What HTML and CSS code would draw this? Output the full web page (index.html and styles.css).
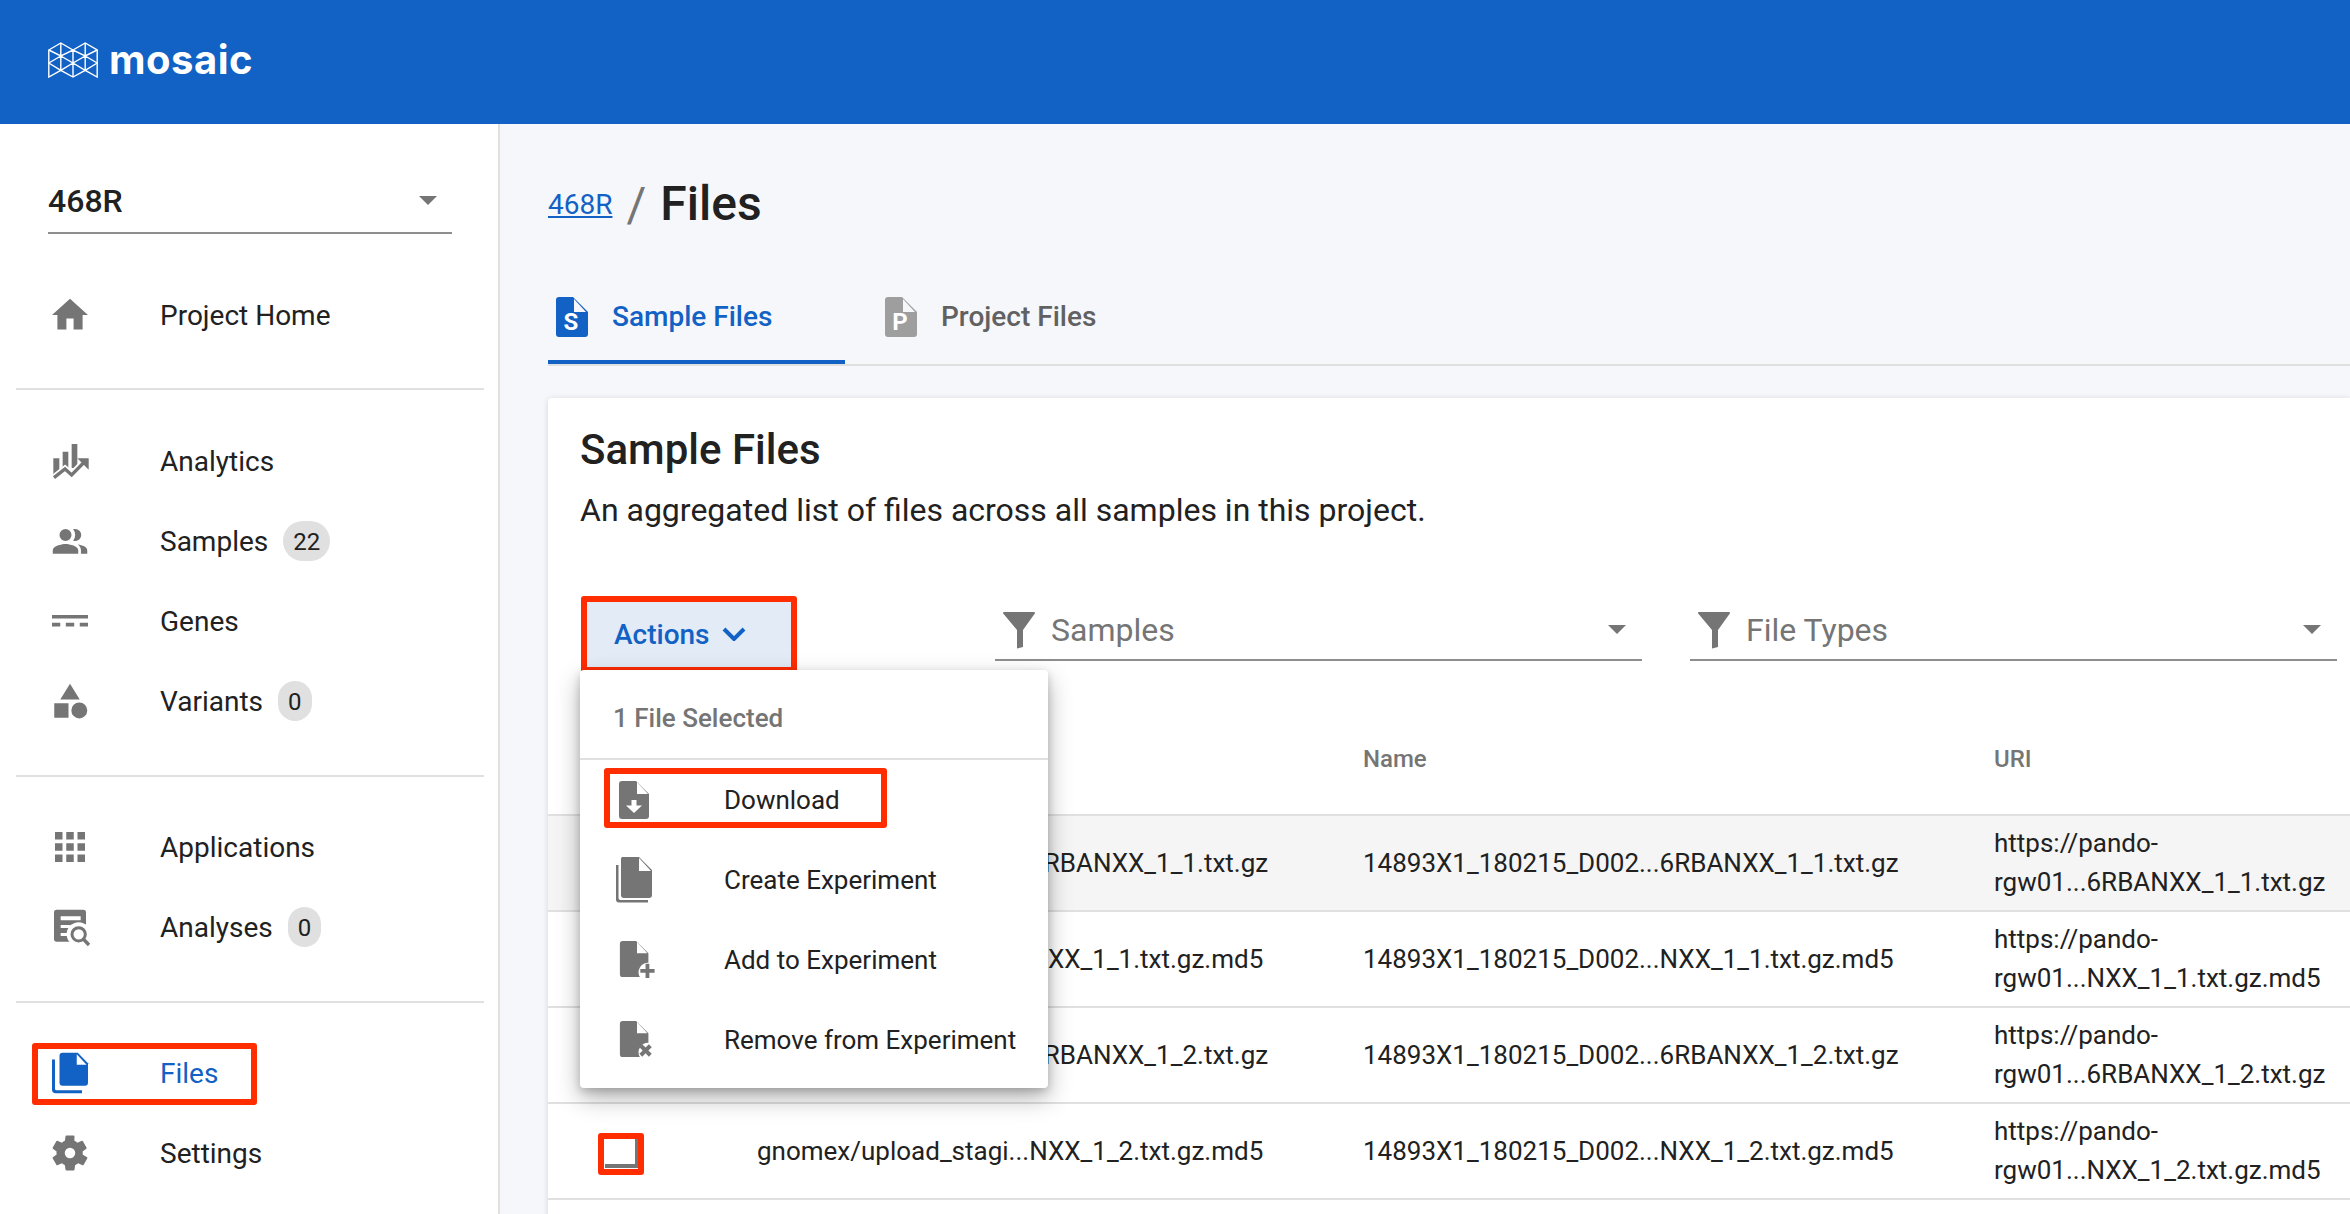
FILE: index.html
```html
<!DOCTYPE html>
<html lang="en">
<head>
<meta charset="utf-8">
<title>Mosaic - Files</title>
<link rel="stylesheet" href="styles.css">
</head>
<body>
<header class="topbar">
  <div class="logo">
    <svg class="logo-mark" viewBox="0 0 50 36" fill="none" stroke="#fff" stroke-width="1.4">
      <path d="M0.8 8 L12.8 1 L25 8 L37.2 1 L49.2 8 V35 L37.2 28.400 L25 35 L12.8 28.400 L0.8 35 Z"/>
      <path d="M12.800 1 V14 M37.200 1 V14 M25 8 V35 M0.800 8 L12.800 14 L25 8 L37.200 14 L49.200 8 M0.800 21 L12.800 14 L25 21 L37.200 14 L49.200 21 M0.800 21 L12.800 28.400 L25 21 L37.200 28.400 L49.200 21 M12.800 14 V28.400 M37.200 14 V28.400"/>
    </svg>
    <span class="logo-text">mosaic</span>
  </div>
</header>
<div class="shell">
  <aside class="sidebar">
    <div class="project-select">
      <span class="project-name">468R</span>
      <span class="caret"></span>
    </div>
    <nav class="nav-group g1">
      <a class="nav-row"><svg class="nav-icon" viewBox="2 2 20 20"><path d="M10 20v-6h4v6h5v-8h3L12 3 2 12h3v8z"/></svg><span>Project Home</span></a>
    </nav>
    <nav class="nav-group g2">
      <a class="nav-row"><svg class="nav-icon" viewBox="36 12 108 108"><path d="M40 58h18v50H40zM68 38h17v48H68zM95 15h17v72H95z"/><path class="cut" d="M42 118L75 92 95 110 136 68"/><path class="line" d="M42 116L75 90 95 108 136 66"/><path d="M112 58h34v34z"/></svg><span>Analytics</span></a>
      <a class="nav-row"><svg class="nav-icon" viewBox="0 0 24 24"><path d="M9 12a4 4 0 1 0 0-8 4 4 0 0 0 0 8zM9 14c-2.900 0-8.500 1.400-8.500 4.200V20.500h17v-2.300C17.500 15.400 11.900 14 9 14z"/><path d="M15.500 12a4 4 0 0 0 0-8c-.5 0-1 .1-1.400.2a6 6 0 0 1 0 7.600c.4.100.9.200 1.400.200zM17.300 14.300c1.200 1 2 2.300 2 3.900v2.300h4.200v-2.300c0-2.400-3.400-3.500-6.200-3.900z"/></svg><span>Samples</span><b class="count">22</b></a>
      <a class="nav-row"><svg class="nav-icon" viewBox="0 0 24 24"><path d="M0 8h24v2.400H0zM0 13.200h5.500v2.400H0zM9.200 13.200h5.600v2.400H9.200zM18.500 13.200H24v2.400h-5.500z"/></svg><span>Genes</span></a>
      <a class="nav-row"><svg class="nav-icon" viewBox="0 0 24 24"><path d="M12 .5l6.500 10.500h-13zM1.500 13.500h9.500V23.200H1.500z"/><circle cx="18.200" cy="18.300" r="5.300"/></svg><span>Variants</span><b class="count">0</b></a>
    </nav>
    <nav class="nav-group g3">
      <a class="nav-row"><svg class="nav-icon" viewBox="0 0 24 24"><path d="M2 2h5v5H2zM9.500 2h5v5h-5zM17 2h5v5h-5zM2 9.500h5v5H2zM9.500 9.500h5v5h-5zM17 9.500h5v5h-5zM2 17h5v5H2zM9.500 17h5v5h-5zM17 17h5v5h-5z"/></svg><span>Applications</span></a>
      <a class="nav-row"><svg class="nav-icon" viewBox="36 30 108 108"><rect x="42" y="32" width="96" height="96" rx="8"/><path class="white" d="M62 52h60v12H62zM62 78h30v9H62zM62 102h24v9H62z"/><circle class="white" cx="116" cy="106" r="36"/><circle class="ring" cx="116" cy="106" r="20"/><path class="handle" d="M130 120l17 18"/></svg><span>Analyses</span><b class="count">0</b></a>
    </nav>
    <nav class="nav-group g4">
      <a class="nav-row active"><svg class="nav-icon tall" viewBox="0 0 24 28"><path d="M7 .5h10.200L24 7.500V20.500a2 2 0 0 1-2 2H7a2 2 0 0 1-2-2V2.500a2 2 0 0 1 2-2z"/><path fill="#fff" d="M16.500 1.500L23 8.500h-6.500z"/><path d="M0 5h2v19.500a1 1 0 0 0 1 1H20v2H2.500A2.500 2.500 0 0 1 0 25z"/></svg><span>Files</span><i class="mark mark-files"></i></a>
      <a class="nav-row"><svg class="nav-icon" viewBox="0 0 24 24"><path d="M19.400 13c.1-.3.100-.7.100-1s0-.7-.1-1l2.500-1.900c.2-.2.300-.5.100-.8l-2.400-4.100c-.1-.3-.4-.4-.7-.3l-3 1.200c-.6-.5-1.300-.9-2-1.200L14 .8c0-.3-.3-.5-.6-.5H8.600c-.3 0-.5.200-.6.500L7.600 3.900c-.7.300-1.400.700-2 1.200L2.600 3.900c-.3-.1-.6 0-.7.300L-.5 8.300c-.2.300-.1.600.1.800L2.100 11c-.1.300-.1.700-.1 1s0 .7.1 1L-.4 14.900c-.2.200-.3.500-.1.800l2.400 4.100c.1.300.4.400.7.300l3-1.200c.6.500 1.300.900 2 1.200l.4 3.100c.1.300.3.500.6.500h4.800c.3 0 .6-.2.600-.5l.4-3.100c.7-.3 1.400-.7 2-1.200l3 1.200c.3.100.6 0 .7-.3l2.400-4.100c.2-.3.100-.6-.1-.8zM11 15.500a3.500 3.500 0 1 1 0-7 3.500 3.500 0 0 1 0 7z" transform="translate(1 0)"/></svg><span>Settings</span></a>
    </nav>
  </aside>

  <main class="content">
    <div class="crumbs">
      <a class="crumb-link">468R</a>
      <span class="crumb-sep">/</span>
      <h1 class="crumb-title">Files</h1>
    </div>
    <div class="tabs">
      <div class="tab active">
        <svg class="tab-icon" viewBox="0 0 32 40"><path d="M3 0h14l15 15v22a3 3 0 0 1-3 3H3a3 3 0 0 1-3-3V3a3 3 0 0 1 3-3z"/><path class="fold" d="M18 2l12 13H18z"/><text x="15" y="33" class="tab-letter">S</text></svg>
        <span>Sample Files</span>
      </div>
      <div class="tab">
        <svg class="tab-icon" viewBox="0 0 32 40"><path d="M3 0h14l15 15v22a3 3 0 0 1-3 3H3a3 3 0 0 1-3-3V3a3 3 0 0 1 3-3z"/><path class="fold" d="M18 2l12 13H18z"/><text x="15" y="33" class="tab-letter">P</text></svg>
        <span>Project Files</span>
      </div>
    </div>

    <section class="card">
      <div class="card-head">
        <h2>Sample Files</h2>
        <p>An aggregated list of files across all samples in this project.</p>
      </div>
      <div class="toolbar">
        <div class="actions-wrap">
          <button class="actions">Actions<svg class="chev" viewBox="0 0 24 14"><path d="M2 2l10 10L22 2" fill="none" stroke="currentColor" stroke-width="4"/></svg></button>
          <i class="mark mark-actions"></i>
          <div class="menu">
            <div class="menu-head">1 File Selected</div>
            <div class="menu-item">
              <svg class="menu-icon" viewBox="0 0 36 38"><path d="M3 0h14l13 13v22a3 3 0 0 1-3 3H3a3 3 0 0 1-3-3V3a3 3 0 0 1 3-3z"/><path class="white" d="M18 1l11 12H18z"/><path class="white" d="M12.500 19h5v5.500h5.500L15 32l-8-7.500h5.500z"/></svg>
              <span>Download</span><i class="mark mark-download"></i>
            </div>
            <div class="menu-item">
              <svg class="menu-icon big" viewBox="0 0 36 46"><path d="M6 0h17l13 13v25a3 3 0 0 1-3 3H8a3 3 0 0 1-3-3V3a3 3 0 0 1 1-3z"/><path class="white" d="M23 1l12 13H23z"/><path d="M0 8h2.500v33a2 2 0 0 0 2 2H32v2.500H3a3 3 0 0 1-3-3z"/></svg>
              <span>Create Experiment</span>
            </div>
            <div class="menu-item">
              <svg class="menu-icon" viewBox="0 0 36 40"><path d="M3 0h14l13 13v10a10 10 0 0 0-9 15H3a3 3 0 0 1-3-3V3a3 3 0 0 1 3-3z"/><path class="white" d="M18 1l11 12H18z"/><path d="M27 24h4v5.500h5.500v4H31V39h-4v-5.500h-5.500v-4H27z"/></svg>
              <span>Add to Experiment</span>
            </div>
            <div class="menu-item">
              <svg class="menu-icon" viewBox="0 0 36 40"><path d="M3 0h14l13 13v10a10 10 0 0 0-9 15H3a3 3 0 0 1-3-3V3a3 3 0 0 1 3-3z"/><path class="white" d="M18 1l11 12H18z"/><path d="M23.500 24.500l3.500 3.500 3.500-3.500 3 3-3.500 3.500 3.500 3.500-3 3-3.500-3.500-3.500 3.500-3-3 3.500-3.500-3.500-3.500z"/></svg>
              <span>Remove from Experiment</span>
            </div>
          </div>
        </div>
        <div class="filter">
          <svg class="funnel" viewBox="0 0 32 38"><path d="M1 1h30a1 1 0 0 1 .8 1.600L20 19v17l-6 1.500V19L.2 2.600A1 1 0 0 1 1 1z"/></svg>
          <span class="filter-label">Samples</span>
          <span class="caret"></span>
        </div>
        <div class="filter">
          <svg class="funnel" viewBox="0 0 32 38"><path d="M1 1h30a1 1 0 0 1 .8 1.600L20 19v17l-6 1.500V19L.2 2.600A1 1 0 0 1 1 1z"/></svg>
          <span class="filter-label">File Types</span>
          <span class="caret"></span>
        </div>
      </div>
      <div class="table">
        <div class="tr th"><div class="c-check"></div><div class="c-path">Path</div><div class="c-name">Name</div><div class="c-uri">URI</div></div>
        <div class="tr hl"><div class="c-check"><i class="box"></i></div><div class="c-path">gnomex/upload_stagi...6RBANXX_1_1.txt.gz</div><div class="c-name">14893X1_180215_D002...6RBANXX_1_1.txt.gz</div><div class="c-uri">https://pando-<br>rgw01...6RBANXX_1_1.txt.gz</div></div>
        <div class="tr"><div class="c-check"><i class="box"></i></div><div class="c-path">gnomex/upload_stagi...NXX_1_1.txt.gz.md5</div><div class="c-name">14893X1_180215_D002...NXX_1_1.txt.gz.md5</div><div class="c-uri">https://pando-<br>rgw01...NXX_1_1.txt.gz.md5</div></div>
        <div class="tr"><div class="c-check"><i class="box"></i></div><div class="c-path">gnomex/upload_stagi...6RBANXX_1_2.txt.gz</div><div class="c-name">14893X1_180215_D002...6RBANXX_1_2.txt.gz</div><div class="c-uri">https://pando-<br>rgw01...6RBANXX_1_2.txt.gz</div></div>
        <div class="tr"><div class="c-check"><i class="box"></i><i class="mark mark-box"></i></div><div class="c-path">gnomex/upload_stagi...NXX_1_2.txt.gz.md5</div><div class="c-name">14893X1_180215_D002...NXX_1_2.txt.gz.md5</div><div class="c-uri">https://pando-<br>rgw01...NXX_1_2.txt.gz.md5</div></div>
      </div>
    </section>
  </main>
</div>
</body>
</html>
```
FILE: styles.css
```css
* { box-sizing: border-box; }
html, body { margin: 0; height: 100%; overflow: hidden; }
body { font-family: Roboto, "Liberation Sans", sans-serif; color: #212121; background: #f5f7fb; font-size: 28px; }

.topbar { height: 124px; background: #1261c4; display: flex; align-items: center; padding-left: 48px; }
.logo { display: flex; align-items: center; gap: 11px; margin-top: -4px; }
.logo-mark { width: 50px; height: 36px; display: block; }
.logo-text { font-family: Inter, sans-serif; font-weight: 700; font-size: 40px; line-height: 40px; color: #fff; letter-spacing: .5px; }

.shell { display: flex; height: 1090px; }
.sidebar { width: 500px; flex: none; background: #fff; border-right: 2px solid #e0e0e0; padding: 0 14px 0 16px; }
.project-select { margin: 49px 32px 0; height: 61px; border-bottom: 2px solid #8e8e8e; display: flex; align-items: center; justify-content: space-between; padding: 0 15px 4px 0; }
.project-name { font-size: 32px; font-weight: 500; }
.caret { width: 0; height: 0; border-left: 9px solid transparent; border-right: 9px solid transparent; border-top: 9px solid #757575; }

.nav-group { border-bottom: 2px solid #e0e0e0; }
.g1 { padding: 41px 0 33px; }
.g2 { padding: 31px 0 34px; }
.g3 { padding: 30px 0 34px; }
.g4 { padding: 30px 0 0; border-bottom: 0; }
.nav-row { position: relative; display: flex; align-items: center; height: 80px; padding-left: 36px; color: #212121; }
.nav-icon { width: 36px; height: 36px; flex: none; margin-right: 72px; fill: #757575; overflow: visible; }
.nav-icon.tall { height: 44px; }
.nav-row.active { color: #1261c4; }
.nav-row.active .nav-icon { fill: #1261c4; }
.nav-icon .cut { fill: none; stroke: #fff; stroke-width: 24; }
.nav-icon .line { fill: none; stroke: #757575; stroke-width: 10; }
.nav-icon .white { fill: #fff; }
.nav-icon .ring { fill: #fff; stroke: #757575; stroke-width: 9; }
.nav-icon .handle { fill: none; stroke: #757575; stroke-width: 10; }
.count { margin-left: 15px; height: 40px; padding: 0 10px; border-radius: 20px; background: #e0e0e0; font-weight: 400; font-size: 24px; line-height: 42px; text-align: center; color: #212121; }

.mark { position: absolute; border: 6px solid #ff2d00; border-radius: 3px; pointer-events: none; }
.mark-files { left: 16px; top: 10px; width: 225px; height: 62px; }
.mark-actions { left: 1px; top: 0; width: 216px; height: 77px; }
.mark-download { left: 24px; top: 8px; width: 283px; height: 60px; }
.mark-box { left: 50px; top: 29px; width: 46px; height: 42px; }

.content { flex: 1; min-width: 0; padding-left: 48px; overflow: hidden; }
.crumbs { display: flex; align-items: center; height: 60px; margin-top: 50px; }
.crumb-link { font-size: 28px; color: #1261c4; text-decoration: underline; margin-right: 14px; }
.crumb-sep { font-size: 48px; color: #757575; margin-right: 14px; font-weight: 400; }
.crumb-title { margin: 0; font-size: 48px; font-weight: 500; line-height: 60px; }

.tabs { display: flex; height: 73px; margin-top: 59px; border-bottom: 2px solid #e0e0e0; }
.tab { display: flex; align-items: center; gap: 24px; width: 297px; height: 71px; padding: 0 0 24px 8px; color: #616161; font-weight: 500; white-space: nowrap; }
.tab.active { color: #1261c4; border-bottom: 4px solid #1261c4; padding-bottom: 20px; }
.tab + .tab { padding-left: 40px; }
.tab-icon { width: 32px; height: 40px; flex: none; fill: #9e9e9e; }
.tab.active .tab-icon { fill: #1261c4; }
.tab-icon .fold { fill: #f5f7fb; }
.tab-letter { font-family: Roboto, sans-serif; font-size: 24px; font-weight: 700; fill: #fff; text-anchor: middle; }

.card { margin-top: 32px; background: #fff; border-radius: 4px 0 0 0; box-shadow: 0 1px 6px rgba(0,0,0,.14); height: 900px; }
.card-head { padding: 32px 32px 0; }
.card-head h2 { margin: 0; font-size: 42px; font-weight: 500; line-height: 40px; }
.card-head p { margin: 20px 0 0; font-size: 32px; line-height: 40px; }

.toolbar { display: flex; align-items: flex-start; padding: 0 13px 0 32px; margin-top: 66px; height: 102px; }
.actions-wrap { position: relative; width: 415px; flex: none; height: 77px; }
.actions { display: flex; align-items: center; gap: 12px; margin: 6px 0 0 7px; width: 204px; height: 65px; padding: 0 0 1px 27px; border: 0; background: #e3ebf6; color: #1261c4; font: 500 28px Roboto, sans-serif; }
.chev { width: 24px; height: 14px; }
.filter { display: flex; align-items: center; width: 647px; height: 62px; margin: 3px 48px 0 0; padding: 0 16px 0 8px; border-bottom: 2px solid #8e8e8e; color: #757575; font-size: 32px; }
.filter:last-child { margin-right: 0; }
.filter-label { flex: 1; margin: 2px 0 0 16px; }
.funnel { width: 32px; height: 38px; fill: #757575; flex: none; margin-top: 2px; }

.menu { position: absolute; left: 0; top: 74px; width: 468px; height: 418px; background: #fff; border-radius: 4px; z-index: 5; box-shadow: 0 10px 24px rgba(0,0,0,.3), 0 3px 8px rgba(0,0,0,.18); }
.menu-head { height: 90px; padding: 8px 33px 0; border-bottom: 2px solid #e0e0e0; display: flex; align-items: center; color: #757575; font-weight: 500; font-size: 26px; }
.menu-item { position: relative; display: flex; align-items: center; height: 80px; font-size: 26px; padding-left: 39px; }
.menu-item span { position: absolute; left: 144px; white-space: nowrap; }
.menu-icon { height: 38px; width: 36px; fill: #757575; }
.menu-icon .white { fill: #fff; }
.menu-icon.big { height: 46px; margin-left: -3px; }

.table { font-size: 26px; }
.tr { display: flex; align-items: center; height: 96px; border-bottom: 2px solid #e0e0e0; position: relative; }
.tr.th { height: 118px; padding-top: 6px; color: #757575; font-weight: 500; font-size: 24px; }
.tr.hl { background: #f5f5f5; }
.c-check { width: 209px; height: 100%; display: flex; align-items: center; padding-left: 57px; flex: none; }
.c-path { width: 606px; flex: none; white-space: nowrap; }
.c-name { width: 631px; flex: none; white-space: nowrap; }
.c-uri { flex: 1; line-height: 39px; white-space: nowrap; }
.box { display: block; width: 33px; height: 29px; margin-top: 4px; border-right: 3px solid #757575; border-bottom: 4px solid #757575; }
```
